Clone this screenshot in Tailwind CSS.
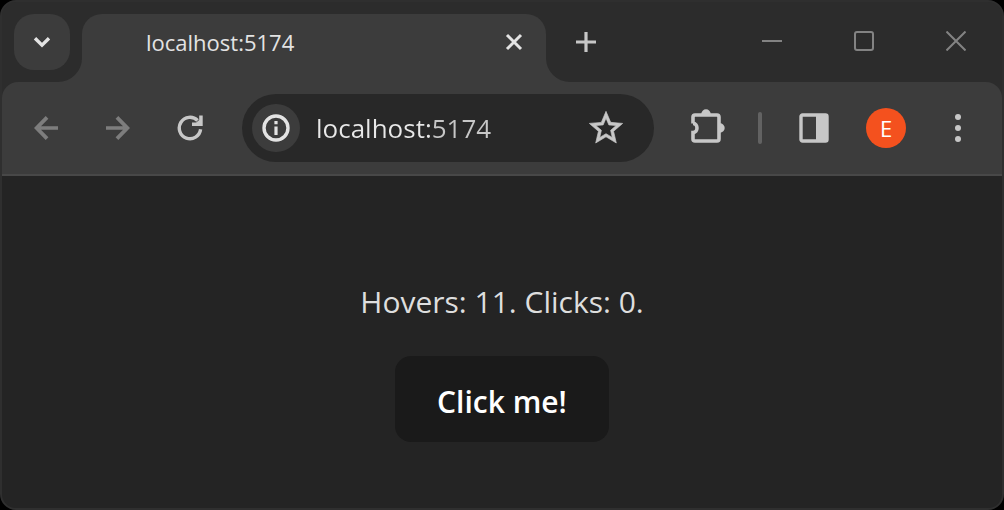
<!DOCTYPE html>
<html lang="en">
<head>
<meta charset="utf-8">
<meta name="viewport" content="width=device-width, initial-scale=1">
<title>localhost:5174</title>
<script src="https://cdn.jsdelivr.net/npm/@tailwindcss/browser@4"></script>
</head>
<body class="bg-black font-['Segoe_UI','Open_Sans','Noto_Sans',sans-serif]">
<div class="flex min-h-screen flex-col overflow-hidden rounded-2xl border-2 border-[#2f2f2f] bg-[#2c2c2c]">

  <!-- Tab strip -->
  <header class="flex h-20 items-start pl-3">
    <button aria-label="Search tabs" class="mt-3 flex size-14 shrink-0 items-center justify-center rounded-[20px] bg-[#3c3c3c] text-[#e3e3e3]">
      <svg class="size-5" viewBox="0 0 20 20" fill="none" stroke="currentColor" stroke-width="3.4"><path d="M3 6.2 10 13.2 17 6.2"/></svg>
    </button>
    <div class="relative mt-3 ml-3 flex h-[68px] w-[464px] items-start rounded-t-[20px] bg-[#3c3c3c] pr-4 pl-16">
      <svg class="absolute bottom-0 -left-6 size-6 text-[#3c3c3c]" viewBox="0 0 24 24" fill="currentColor"><path d="M24 0V24H0A24 24 0 0 0 24 0Z"/></svg>
      <svg class="absolute -right-6 bottom-0 size-6 text-[#3c3c3c]" viewBox="0 0 24 24" fill="currentColor"><path d="M0 0V24H24A24 24 0 0 1 0 0Z"/></svg>
      <a href="#" class="flex-1 truncate pt-3 text-[22px] leading-8 text-[#e3e3e3]">localhost:5174</a>
      <button aria-label="Close tab" class="mt-3 flex size-8 items-center justify-center text-[#e3e3e3]">
        <svg class="size-5" viewBox="0 0 20 20" fill="none" stroke="currentColor" stroke-width="3"><path d="M3 3 17 17M17 3 3 17"/></svg>
      </button>
    </div>
    <button aria-label="New tab" class="mt-3 ml-3 flex size-14 items-center justify-center text-[#c7c7c7]">
      <svg class="size-5" viewBox="0 0 20 20" fill="none" stroke="currentColor" stroke-width="3.2"><path d="M10 0V20M0 10H20"/></svg>
    </button>
    <div class="ml-auto flex h-[78px] text-[#838383]">
      <button aria-label="Minimize" class="flex w-[92px] items-center justify-center"><svg class="size-5" viewBox="0 0 20 20" stroke="currentColor" stroke-width="2"><path d="M0 10H20"/></svg></button>
      <button aria-label="Maximize" class="flex w-[92px] items-center justify-center"><svg class="size-5" viewBox="0 0 20 20" fill="none" stroke="currentColor" stroke-width="2"><rect x="1" y="1" width="18" height="18" rx="2"/></svg></button>
      <button aria-label="Close" class="flex w-[92px] items-center justify-center"><svg class="size-5" viewBox="0 0 20 20" stroke="currentColor" stroke-width="2"><path d="M.5 .5 19.5 19.5M19.5 .5 .5 19.5"/></svg></button>
    </div>
  </header>

  <!-- Toolbar -->
  <nav class="flex items-center rounded-t-2xl border-b-2 border-[#484848] bg-[#3c3c3c] px-4 py-3">
    <div class="flex gap-4 text-[#7d7d7d]">
      <button aria-label="Back" class="flex size-14 items-center justify-center"><svg class="size-6" viewBox="0 0 24 24" fill="currentColor"><path d="M24 10.2H7L14.4 2.7 11.7 0 0 12 11.7 24 14.4 21.3 7 13.8H24Z"/></svg></button>
      <button aria-label="Forward" class="flex size-14 items-center justify-center"><svg class="size-6" viewBox="0 0 24 24" fill="currentColor"><path d="M0 10.2H17L9.6 2.7 12.3 0 24 12 12.3 24 9.6 21.3 17 13.8H0Z"/></svg></button>
      <button aria-label="Reload" class="flex size-14 items-center justify-center text-[#c7c7c7]"><svg class="size-[26px]" viewBox="0 0 26 26" fill="none" stroke="currentColor" stroke-width="3.4"><path d="M23.6 14.3A10.7 10.7 0 1 1 20.6 5.5"/><path d="M22.2 .5H25.7V11H15V7.6H19.2L22.2 5Z" fill="currentColor" stroke="none"/></svg></button>
    </div>
    <div class="ml-6 flex h-[68px] flex-1 items-center rounded-full bg-[#282828] pr-5 pl-[10px]">
      <button aria-label="View site information" class="flex size-12 shrink-0 items-center justify-center rounded-full bg-[#3c3c3c] text-[#e3e3e3]">
        <svg class="size-7" viewBox="0 0 28 28" fill="none" stroke="currentColor" stroke-width="3.4"><circle cx="14" cy="14" r="12"/><path d="M14 12.5V21M14 7V10.3" stroke-width="3.2"/></svg>
      </button>
      <input type="text" aria-label="Address" value="localhost:5174" class="ml-4 h-12 w-0 flex-1 bg-[linear-gradient(to_right,#e8e8e8_117px,#c7c7c7_117px)] bg-clip-text text-[26px] text-transparent outline-none">
      <button aria-label="Bookmark this tab" class="flex size-14 shrink-0 items-center justify-center text-[#c7c7c7]">
        <svg class="size-10" viewBox="0 0 24 24" fill="currentColor" stroke="currentColor" stroke-width=".4"><path d="M22 9.24l-7.19-.62L12 2 9.19 8.63 2 9.24l5.46 4.73L5.82 21 12 17.27 18.18 21l-1.63-7.03L22 9.24zM12 15.4l-3.76 2.27 1-4.28-3.32-2.88 4.38-.38L12 6.1l1.71 4.04 4.38.38-3.32 2.88 1 4.28L12 15.4z"/></svg>
      </button>
    </div>
    <div class="ml-[26px] flex items-center text-[#c7c7c7]">
      <button aria-label="Extensions" class="flex size-14 items-center justify-center">
        <svg class="size-10" viewBox="-2 0 40 40" fill="none" stroke="currentColor" stroke-width="3.6"><path d="M3 15.4V9Q3 7 5 7H27Q29 7 29 9V31Q29 33 27 33H5Q3 33 3 31V24.6C8.3 24.6 8.3 15.4 3 15.4"/><path d="M11.3 6A4.7 4.7 0 0 1 20.7 6ZM30 15.3A4.7 4.7 0 0 1 30 24.7Z" fill="currentColor" stroke="none"/></svg>
      </button>
      <span class="mr-6 ml-[22px] h-8 w-1 rounded-full bg-[#626262]"></span>
      <button aria-label="Side panel" class="flex size-14 items-center justify-center">
        <svg class="size-[30px]" viewBox="0 0 30 30" fill="none" stroke="currentColor" stroke-width="3.4"><rect x="2" y="2" width="26" height="26" rx="1.5"/><path d="M17 2H28V28H17Z" fill="currentColor" stroke="none"/></svg>
      </button>
      <button aria-label="Profile" class="mx-6 size-10 rounded-full bg-[#f4511e] text-center text-[22px] leading-10 text-white">E</button>
      <button aria-label="Menu" class="flex size-14 items-center justify-center">
        <svg class="size-7" viewBox="0 0 28 28" fill="currentColor"><circle cx="14" cy="3" r="3"/><circle cx="14" cy="14" r="3"/><circle cx="14" cy="25" r="3"/></svg>
      </button>
    </div>
  </nav>

  <!-- Page -->
  <main class="flex flex-1 flex-col items-center bg-[#242424] pt-[102px] pb-8">
    <p class="text-3xl leading-[48px] text-[#dedede]">Hovers: 11. Clicks: 0.</p>
    <button class="mt-[30px] rounded-2xl bg-[#1a1a1a] px-[42px] pt-[22px] pb-4 text-3xl leading-[48px] font-semibold text-white">Click me!</button>
  </main>
</div>
</body>
</html>
